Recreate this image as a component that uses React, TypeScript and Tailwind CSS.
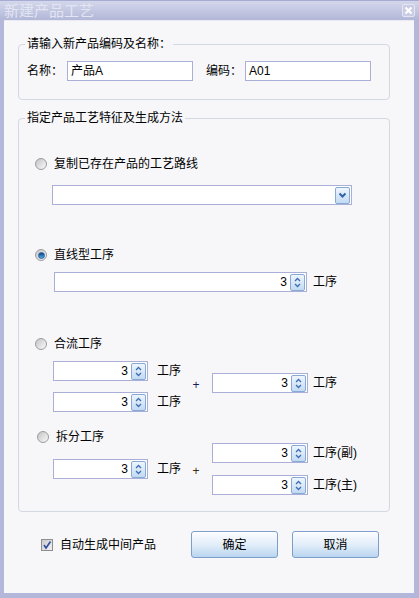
import React from "react";

function Radio({ checked, label }: { checked?: boolean; label: string }) {
  return (
    <div className="flex items-center h-[16px] leading-[16px]">
      <span className="w-[12px] h-[12px] rounded-full border border-[#9c9c9c] bg-linear-to-br from-[#c4c4c4] to-[#fafafa] flex items-center justify-center">
        {checked && (
          <span className="w-[7px] h-[7px] rounded-full bg-linear-to-b from-[#0c3f84] to-[#4fb2ea] border border-[#2a5f9c]" />
        )}
      </span>
      <span className="ml-[7px]">{label}</span>
    </div>
  );
}

function SpinBtn() {
  return (
    <span className="w-[15px] h-[17px] rounded-[2px] border border-[#86a9d6] bg-linear-to-b from-[#eef5fd] to-[#c3daf3] flex items-center justify-center">
      <svg width="9" height="13" viewBox="0 0 9 13">
        <path d="M2 5 L4.5 2.5 L7 5" fill="none" stroke="#3b6fb3" strokeWidth="1.3" />
        <path d="M2 8 L4.5 10.5 L7 8" fill="none" stroke="#3b6fb3" strokeWidth="1.3" />
      </svg>
    </span>
  );
}

function Spin({ w }: { w: string }) {
  return (
    <div className={`${w} h-[20px] bg-white border border-[#a9afd6] flex items-center justify-end pr-[1px]`}>
      <span className="mr-[3px] leading-[16px]">3</span>
      <SpinBtn />
    </div>
  );
}

function Button({ label }: { label: string }) {
  return (
    <button className="w-[87px] h-[27px] rounded-[3px] border border-[#7c9ecb] bg-linear-to-b from-[#fcfdff] via-[#e3eefa] to-[#b9d5ef] text-[12px] text-black shadow-[inset_0_1px_0_#ffffff]">
      {label}
    </button>
  );
}

export default function App() {
  return (
    <div className="w-[419px] h-[598px] bg-[#b3b8da] flex flex-col text-[12px] text-black font-['Liberation_Sans','Noto_Sans_CJK_SC',sans-serif]">
      {/* title bar */}
      <div className="h-[20px] flex items-center justify-between pl-[4px] pr-[4px] bg-linear-to-b from-[#d4d7eb] to-[#b2b7d8] border-t border-[#a6acd2]">
        <span className="text-[15px] leading-none text-[#e2e5f2]">新建产品工艺</span>
        <span className="w-[13px] h-[13px] rounded-[2px] border border-[#e4e6f3] bg-[#c9cce4] flex items-center justify-center">
          <svg width="9" height="9" viewBox="0 0 9 9">
            <path d="M1.5 1.5 L7.5 7.5 M7.5 1.5 L1.5 7.5" stroke="#ffffff" strokeWidth="2.2" />
          </svg>
        </span>
      </div>

      {/* body */}
      <div className="flex-1 ml-[4px] mr-[5px] mb-[5px] bg-[#f7f7fa] border-t border-[#e9eaf3]">
        {/* group 1 */}
        <fieldset className="mt-[15px] ml-[14px] w-[372px] border border-[#d3d8e2] rounded-[4px] pb-[18px]">
          <legend className="ml-[6px] px-[2px] leading-[16px]">请输入新产品编码及名称：</legend>
          <div className="mt-[9px] pl-[8px] flex items-center">
            <span className="w-[40px]">名称：</span>
            <div className="w-[126px] h-[20px] bg-white border border-[#a9afd6] flex items-center pl-[3px]">产品A</div>
            <span className="ml-[13px] w-[39px]">编码：</span>
            <div className="w-[126px] h-[20px] bg-white border border-[#a9afd6] flex items-center pl-[3px]">A01</div>
          </div>
        </fieldset>

        {/* group 2 */}
        <fieldset className="mt-[10px] ml-[14px] w-[372px] border border-[#d3d8e2] rounded-[4px] pb-[16px]">
          <legend className="ml-[6px] px-[2px] leading-[16px]">指定产品工艺特征及生成方法</legend>

          <div className="mt-[30px] pl-[16px]">
            <Radio label="复制已存在产品的工艺路线" />
          </div>
          <div className="mt-[13px] ml-[33px] w-[300px] h-[20px] bg-white border border-[#a9afd6] flex items-center justify-end pr-[1px]">
            <span className="w-[15px] h-[17px] rounded-[2px] border border-[#86a9d6] bg-linear-to-b from-[#eef5fd] to-[#c3daf3] flex items-center justify-center">
              <svg width="9" height="8" viewBox="0 0 9 8">
                <path d="M1.5 2.5 L4.5 5.5 L7.5 2.5" fill="none" stroke="#2f64ad" strokeWidth="2" />
              </svg>
            </span>
          </div>

          <div className="mt-[42px] pl-[16px]">
            <Radio checked label="直线型工序" />
          </div>
          <div className="mt-[9px] ml-[35px] flex items-center">
            <Spin w="w-[253px]" />
            <span className="ml-[6px]">工序</span>
          </div>

          <div className="mt-[44px] pl-[16px]">
            <Radio label="合流工序" />
          </div>
          <div className="mt-[9px] ml-[34px] flex items-start">
            <div className="w-[135px] flex flex-col gap-[11px]">
              <div className="flex items-center">
                <Spin w="w-[95px]" />
                <span className="ml-[9px]">工序</span>
              </div>
              <div className="flex items-center">
                <Spin w="w-[95px]" />
                <span className="ml-[9px]">工序</span>
              </div>
            </div>
            <span className="w-[16px] text-center mt-[16px] leading-[16px] text-[#1a1a5a]">+</span>
            <div className="ml-[8px] mt-[12px] flex items-center">
              <Spin w="w-[96px]" />
              <span className="ml-[5px]">工序</span>
            </div>
          </div>

          <div className="mt-[17px] pl-[18px]">
            <Radio label="拆分工序" />
          </div>
          <div className="-mt-[2px] ml-[34px] flex items-start">
            <div className="w-[135px] mt-[16px] flex items-center">
              <Spin w="w-[95px]" />
              <span className="ml-[9px]">工序</span>
            </div>
            <span className="w-[16px] text-center mt-[20px] leading-[16px] text-[#3a2a10]">+</span>
            <div className="ml-[8px] flex flex-col gap-[12px]">
              <div className="flex items-center">
                <Spin w="w-[96px]" />
                <span className="ml-[5px]">工序(副)</span>
              </div>
              <div className="flex items-center">
                <Spin w="w-[96px]" />
                <span className="ml-[5px]">工序(主)</span>
              </div>
            </div>
          </div>
        </fieldset>

        {/* bottom row */}
        <div className="mt-[19px] pl-[37px] flex items-center">
          <div className="w-[150px] flex items-center">
            <span className="w-[12px] h-[12px] border border-[#8e8e8e] bg-linear-to-br from-[#c9c9cf] to-[#f2f2f6] flex items-center justify-center">
              <svg width="10" height="10" viewBox="0 0 10 10">
                <path d="M2 5 L4 8 L8.5 1.5" fill="none" stroke="#2f4f9c" strokeWidth="1.6" />
              </svg>
            </span>
            <span className="ml-[7px] leading-[16px]">自动生成中间产品</span>
          </div>
          <Button label="确定" />
          <span className="w-[14px]" />
          <Button label="取消" />
        </div>
      </div>
    </div>
  );
}
